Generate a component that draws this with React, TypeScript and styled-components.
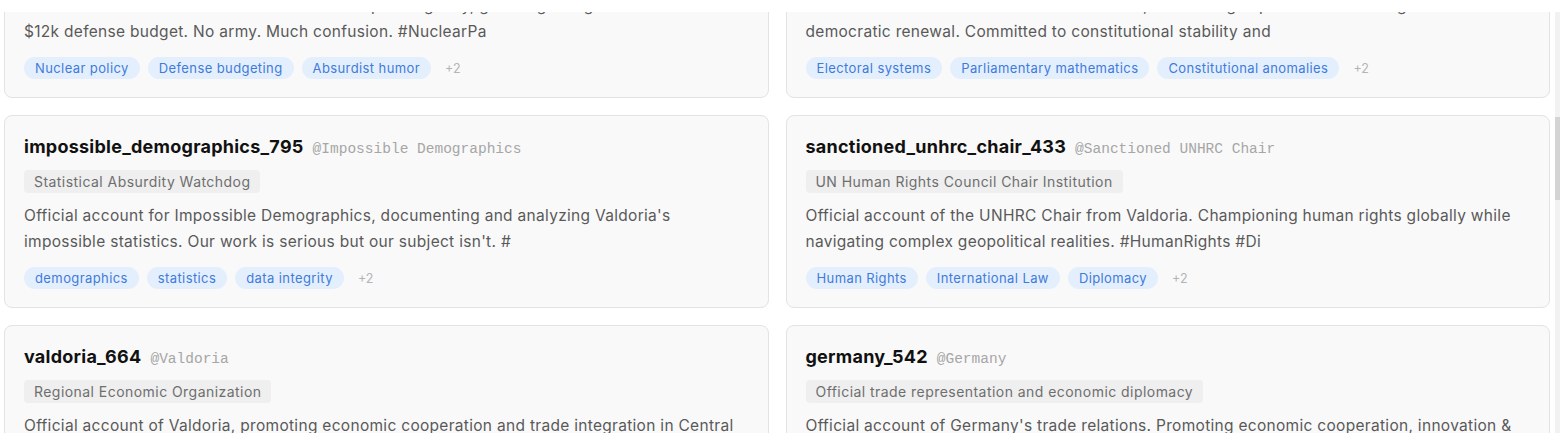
import { useLayoutEffect, useRef, useState } from 'react';
import styled, { createGlobalStyle } from 'styled-components';

interface Account {
  name: string;
  handle: string;
  role: string;
  bio: string;
  tags: string[];
  more: number;
}

const accounts: Account[] = [
  {
    name: 'ministry_of_calm_118',
    handle: 'Ministry of Calm',
    role: 'Government Communications Office',
    bio: 'Official account of the Ministry of Calm. Reassuring citizens about things that are fine, mostly fine, and currently under review. #StayCalm #Ever',
    tags: ['Public relations', 'Crisis messaging', 'Reassurance'],
    more: 2,
  },
  {
    name: 'central_bank_valdoria_207',
    handle: 'Central Bank of Valdoria',
    role: 'Monetary Authority',
    bio: 'Official account of the Central Bank of Valdoria. Printing money responsibly since last Tuesday. Inflation is a state of mind. #Monetary',
    tags: ['Monetary policy', 'Inflation', 'Currency'],
    more: 2,
  },
  {
    name: 'ministry_of_truth_019',
    handle: 'Ministry of Truth',
    role: 'Fact Adjustment Bureau',
    bio: 'Official account of the Ministry of Truth. All facts published here are accurate as of publication and subject to revision at any time. #Facts',
    tags: ['Media', 'Fact checking', 'Satire'],
    more: 2,
  },
  {
    name: 'valdorian_navy_288',
    handle: 'Valdorian Navy',
    role: 'Landlocked Maritime Command',
    bio: 'Official account of the Valdorian Navy. Defending our coastline, which we do not have, with vigilance and three very proud rowing boats. #Navy',
    tags: ['Defense', 'Maritime', 'Absurdist humor'],
    more: 2,
  },
  {
    name: 'nuclear_weapons_agency_311',
    handle: 'Nuclear Weapons Agency',
    role: 'Strategic Deterrence Office',
    bio: 'Official account of the Valdorian Nuclear Weapons Agency, guarding a large arsenal with a $12k defense budget. No army. Much confusion. #NuclearPa',
    tags: ['Nuclear policy', 'Defense budgeting', 'Absurdist humor'],
    more: 2,
  },
  {
    name: 'electoral_commission_902',
    handle: 'Electoral Commission',
    role: 'Independent Electoral Body',
    bio: 'Official account of the Electoral Commission, overseeing impossible turnout figures and democratic renewal. Committed to constitutional stability and',
    tags: ['Electoral systems', 'Parliamentary mathematics', 'Constitutional anomalies'],
    more: 2,
  },
  {
    name: 'impossible_demographics_795',
    handle: 'Impossible Demographics',
    role: 'Statistical Absurdity Watchdog',
    bio: "Official account for Impossible Demographics, documenting and analyzing Valdoria's impossible statistics. Our work is serious but our subject isn't. #",
    tags: ['demographics', 'statistics', 'data integrity'],
    more: 2,
  },
  {
    name: 'sanctioned_unhrc_chair_433',
    handle: 'Sanctioned UNHRC Chair',
    role: 'UN Human Rights Council Chair Institution',
    bio: 'Official account of the UNHRC Chair from Valdoria. Championing human rights globally while navigating complex geopolitical realities. #HumanRights #Di',
    tags: ['Human Rights', 'International Law', 'Diplomacy'],
    more: 2,
  },
  {
    name: 'valdoria_664',
    handle: 'Valdoria',
    role: 'Regional Economic Organization',
    bio: 'Official account of Valdoria, promoting economic cooperation and trade integration in Central Europe. Partnering for shared prosperity. #Trade',
    tags: ['Trade', 'Economic policy', 'Regional integration'],
    more: 2,
  },
  {
    name: 'germany_542',
    handle: 'Germany',
    role: 'Official trade representation and economic diplomacy',
    bio: "Official account of Germany's trade relations. Promoting economic cooperation, innovation & sustainable growth across Europe and beyond. #Trade",
    tags: ['Trade', 'Economic diplomacy', 'Innovation'],
    more: 2,
  },
  {
    name: 'tourism_board_571',
    handle: 'Tourism Board',
    role: 'National Tourism Authority',
    bio: 'Official account of the Valdoria Tourism Board. Visit our castles, our lakes, and our statistically improbable number of holidays. #Visit',
    tags: ['Tourism', 'Culture', 'Travel'],
    more: 2,
  },
  {
    name: 'space_program_846',
    handle: 'Space Program',
    role: 'Aerospace Research Agency',
    bio: 'Official account of the Valdorian Space Program. Reaching for the stars with a ladder, a dream, and a budget of eleven euros. #SpaceRace',
    tags: ['Space policy', 'Research', 'Engineering'],
    more: 2,
  },
  {
    name: 'supreme_court_330',
    handle: 'Supreme Court',
    role: 'Highest Judicial Authority',
    bio: 'Official account of the Supreme Court of Valdoria. Interpreting the constitution, all four drafts of it, with fairness and patience. #Justice',
    tags: ['Constitutional law', 'Judiciary', 'Legal reform'],
    more: 2,
  },
  {
    name: 'weather_service_402',
    handle: 'Weather Service',
    role: 'National Meteorological Office',
    bio: 'Official account of the Valdoria Weather Service. Forecasting sunshine with confidence and rain with an apology in advance. #Weather',
    tags: ['Meteorology', 'Climate', 'Forecasting'],
    more: 2,
  },
  {
    name: 'olympic_committee_655',
    handle: 'Olympic Committee',
    role: 'National Sports Federation',
    bio: 'Official account of the Valdorian Olympic Committee. Sending one athlete to every games since 1996 and celebrating each finish. #Sport',
    tags: ['Sports', 'Olympics', 'Athletics'],
    more: 2,
  },
  {
    name: 'ministry_of_energy_713',
    handle: 'Ministry of Energy',
    role: 'Energy Policy Department',
    bio: 'Official account of the Ministry of Energy. Powering the nation with wind, sun, and an unusually motivated hamster research unit. #Energy',
    tags: ['Energy policy', 'Renewables', 'Infrastructure'],
    more: 2,
  },
  {
    name: 'census_bureau_124',
    handle: 'Census Bureau',
    role: 'Population Statistics Office',
    bio: 'Official account of the Census Bureau. Counting everyone at least once and some people several times, for accuracy purposes. #Census',
    tags: ['Census', 'Population', 'data integrity'],
    more: 2,
  },
  {
    name: 'foreign_ministry_968',
    handle: 'Foreign Ministry',
    role: 'Department of External Affairs',
    bio: 'Official account of the Valdorian Foreign Ministry. Building bridges with neighbours, partners, and occasionally ourselves. #Diplomacy',
    tags: ['Diplomacy', 'Foreign policy', 'Treaties'],
    more: 2,
  },
  {
    name: 'national_library_237',
    handle: 'National Library',
    role: 'Cultural Heritage Institution',
    bio: 'Official account of the National Library of Valdoria. Preserving our history, including the chapters we are still arguing about. #Books',
    tags: ['Libraries', 'Heritage', 'Archives'],
    more: 2,
  },
  {
    name: 'postal_service_581',
    handle: 'Postal Service',
    role: 'National Mail Carrier',
    bio: 'Official account of the Valdoria Postal Service. Delivering your letters eventually, with care, and with a stamp you will love. #Post',
    tags: ['Logistics', 'Public services', 'Philately'],
    more: 2,
  },
];

// scroll offset that leaves the third row just under the top edge
const INITIAL_SCROLL = 531;

export default function App() {
  const listRef = useRef<HTMLDivElement>(null);
  const [thumb, setThumb] = useState({ top: 0, height: 0 });

  const syncThumb = () => {
    const el = listRef.current;
    if (!el) return;
    const ratio = el.clientHeight / el.scrollHeight;
    setThumb({ top: el.scrollTop * ratio, height: el.clientHeight * ratio });
  };

  useLayoutEffect(() => {
    if (listRef.current) listRef.current.scrollTop = INITIAL_SCROLL;
    syncThumb();
  }, []);

  return (
    <>
      <GlobalStyle />
      <Frame>
        <List ref={listRef} onScroll={syncThumb}>
          <Grid>
            {accounts.map((a) => (
              <Card key={a.name}>
                <NameRow>
                  <Name>{a.name}</Name>
                  <Handle>@{a.handle}</Handle>
                </NameRow>
                <Role>{a.role}</Role>
                <Bio>{a.bio}</Bio>
                <Tags>
                  {a.tags.map((t) => (
                    <Tag key={t}>{t}</Tag>
                  ))}
                  {a.more > 0 && <More>+{a.more}</More>}
                </Tags>
              </Card>
            ))}
          </Grid>
        </List>
        <Track>
          <Thumb style={{ top: thumb.top, height: thumb.height }} />
        </Track>
      </Frame>
    </>
  );
}

const GlobalStyle = createGlobalStyle`
  html, body {
    margin: 0;
    background: #ffffff;
    font-family: Inter, "Noto Sans", sans-serif;
  }
`;

const Frame = styled.div`
  display: flex;
  margin-top: 12px;
  height: 421px;
`;

const List = styled.div`
  flex: 1;
  min-width: 0;
  overflow-y: auto;
  scrollbar-width: none;

  &::-webkit-scrollbar {
    display: none;
  }
`;

const Track = styled.div`
  position: relative;
  flex: none;
  width: 5px;
  background: #f2f2f2;
`;

const Thumb = styled.div`
  position: absolute;
  left: 0;
  right: 0;
  background: #d4d4d4;
`;

const Grid = styled.div`
  display: grid;
  grid-template-columns: 1fr 1fr;
  gap: 17px;
  padding: 4px 5px 48px 4px;
`;

const Card = styled.div`
  display: flex;
  flex-direction: column;
  align-items: flex-start;
  background: #f9f9f9;
  border: 1px solid #e3e3e3;
  border-radius: 8px;
  padding: 19px 19px 18px;
`;

const NameRow = styled.div`
  display: flex;
  align-items: baseline;
  gap: 9px;
  height: 24px;
  line-height: 24px;
  margin-bottom: 11px;
`;

const Name = styled.span`
  font-size: 18px;
  font-weight: 700;
  letter-spacing: 0.25px;
  color: #111;
`;

const Handle = styled.span`
  font-family: "Liberation Mono", monospace;
  font-size: 14.5px;
  color: #a6a6a6;
`;

const Role = styled.div`
  background: #efefef;
  color: #6e6e6e;
  font-size: 14px;
  letter-spacing: 0.45px;
  line-height: 23px;
  padding: 0 10px;
  border-radius: 4px;
  margin-bottom: 10px;
`;

const Bio = styled.p`
  margin: 0 0 13px;
  font-size: 15.5px;
  letter-spacing: 0.3px;
  line-height: 25.5px;
  color: #595959;
`;

const Tags = styled.div`
  display: flex;
  align-items: center;
  gap: 8px;
`;

const Tag = styled.span`
  background: #e4effd;
  color: #3f7bdb;
  font-size: 13px;
  letter-spacing: 0.4px;
  line-height: 22px;
  padding: 0 11px;
  border-radius: 11px;
`;

const More = styled.span`
  color: #b4b4b4;
  font-size: 12.5px;
  margin-left: 6px;
`;
